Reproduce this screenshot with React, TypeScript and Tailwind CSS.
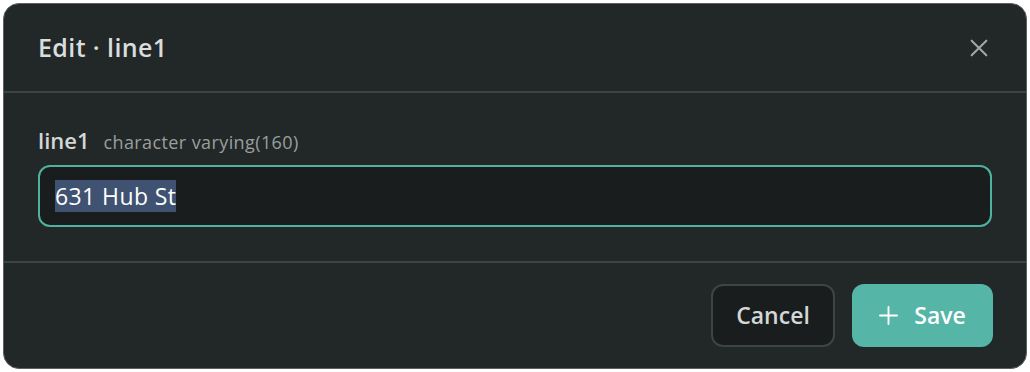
import React from 'react';

const font = { fontFamily: '"Open Sans", "Noto Sans", sans-serif' };

export default function App() {
  return (
    <div className="w-[1030px] h-[372px] bg-white p-[3px]" style={font}>
      <div className="w-[1024px] h-[366px] rounded-[16px] border border-[#5b6362] bg-[#222728] flex flex-col overflow-hidden">
        {/* Header */}
        <div className="h-[89px] flex items-center justify-between pl-[34px] pr-[36px] border-b-2 border-[#3a4443]">
          <h2 className="text-[25px] font-semibold text-[#d9dddc] tracking-[0.4px]">Edit · line1</h2>
          <svg width="22" height="22" viewBox="0 0 24 24" fill="none" stroke="#a2a8a7" strokeWidth="2.2" strokeLinecap="round">
            <path d="M4 4L20 20M20 4L4 20" />
          </svg>
        </div>

        {/* Body */}
        <div className="flex-1 pl-[34px] pr-[34px] pt-[32px] border-b-2 border-[#3a4443]">
          <div className="flex items-baseline gap-[14px] mb-[8px] leading-[30px]">
            <span className="text-[22px] font-semibold text-[#d3d7d6]">line1</span>
            <span className="text-[18px] text-[#999f9e] tracking-[0.4px]">character varying(160)</span>
          </div>
          <div className="h-[62px] rounded-[12px] border-2 border-[#4db3a0] bg-[#1a1d1e] flex items-center pl-[15px]">
            <span className="text-[23px] text-white bg-[#3f5272] leading-[32px] tracking-[0.4px]">631 Hub St</span>
          </div>
        </div>

        {/* Footer */}
        <div className="h-[105px] flex items-center justify-end gap-[17px] pr-[33px]">
          <button className="h-[63px] w-[124px] rounded-[12px] border-2 border-[#3d4544] bg-[#1a1d1e] text-[23px] font-semibold text-[#d3d7d6]">
            Cancel
          </button>
          <button className="h-[63px] w-[141px] rounded-[12px] bg-[#55b5a7] text-[23px] font-semibold text-white flex items-center justify-center gap-[16px]">
            <svg width="19" height="19" viewBox="0 0 20 20" fill="none" stroke="white" strokeWidth="2" strokeLinecap="round">
              <path d="M10 1V19M1 10H19" />
            </svg>
            Save
          </button>
        </div>
      </div>
    </div>
  );
}
